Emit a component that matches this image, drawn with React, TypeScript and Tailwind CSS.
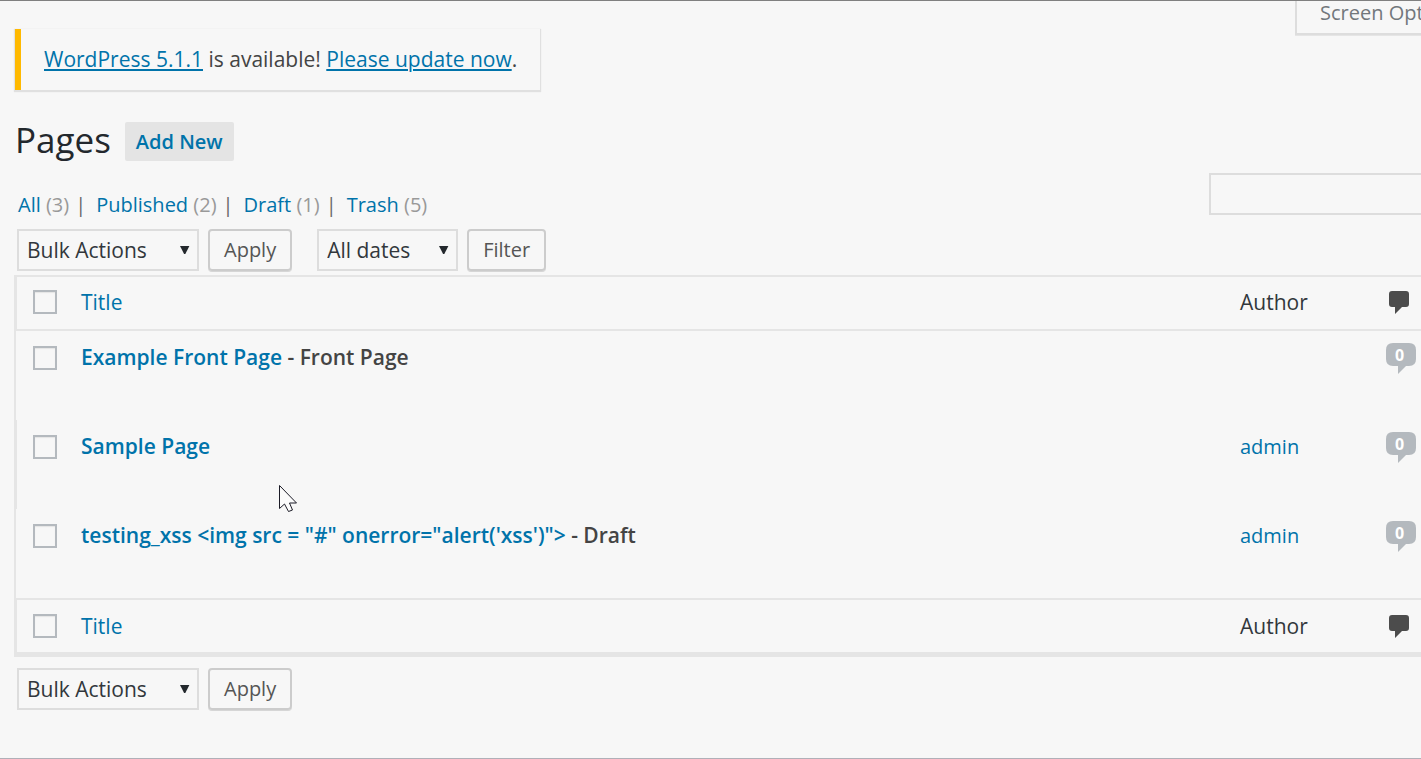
import React from "react";

type Row = { title: string; state?: string; author?: string; shaded?: boolean };

const rows: Row[] = [
  { title: "Example Front Page", state: "Front Page" },
  { title: "Sample Page", author: "admin", shaded: true },
  { title: `testing_xss <img src = "#" onerror="alert('xss')">`, state: "Draft", author: "admin" },
];

const views = [
  { label: "All", count: 3 },
  { label: "Published", count: 2 },
  { label: "Draft", count: 1 },
  { label: "Trash", count: 5 },
];

function Check({ label }: { label: string }) {
  return (
    <input
      type="checkbox"
      aria-label={label}
      className="block size-6 appearance-none border-2 border-[#b4b9be] bg-[#f7f7f7] shadow-[inset_0_1px_1px_#e4e4e4]"
    />
  );
}

function Dropdown({ label, option, className }: { label: string; option: string; className: string }) {
  return (
    <div className={`relative h-[42px] ${className}`}>
      <select
        aria-label={label}
        className="block h-full w-full appearance-none border-2 border-[#dddddd] bg-[#f7f7f7] pl-2 text-[21px] leading-6 text-[#32373c]"
      >
        <option>{option}</option>
      </select>
      <svg className="pointer-events-none absolute top-4 right-[9px]" width="10" height="10" viewBox="0 0 10 10" aria-hidden="true">
        <path d="M0 1H9.400L5.300 9H4.100Z" fill="#23282d" />
      </svg>
    </div>
  );
}

function ActionButton({ children }: { children: string }) {
  return (
    <button
      type="button"
      className="h-[42px] rounded-[4px] border-2 border-[#cccccc] px-[14px] pb-px text-[20px] leading-6 text-[#555555] shadow-[0_1px_0_#d6d6d6]"
    >
      {children}
    </button>
  );
}

function HeadingCells({ name }: { name: string }) {
  return (
    <>
      <td className="w-[65px] border-l border-[#e5e5e5] pl-4">
        <Check label={`Select all, ${name}`} />
      </td>
      <th scope="col" className="text-left font-normal">
        <a href="#title" className="text-[#0073aa]">Title</a>
      </th>
      <th scope="col" className="w-[146px] text-left font-normal text-[#32373c]">Author</th>
      <th scope="col" className="w-[35px] pl-[3px]">
        <svg width="20" height="24" viewBox="0 0 20 24" role="img" aria-label="Comments" className="block">
          <path d="M3 1H17Q20 1 20 4V14Q20 17 17 17H13L6 24V17H3Q0 17 0 14V4Q0 1 3 1Z" fill="#4c4c4c" />
        </svg>
      </th>
    </>
  );
}

function CommentCount() {
  return (
    <a href="#comments" aria-label="0 comments" className="relative block h-[31px] w-[30px]">
      <svg width="30" height="31" viewBox="0 0 30 31" aria-hidden="true">
        <path d="M7 0H23Q30 0 30 7V16Q30 23 23 23H20L12 31V23H7Q0 23 0 16V7Q0 0 7 0Z" fill="#b4b9be" />
      </svg>
      <span className="absolute inset-x-0 top-0 pr-[3px] text-center text-[16px] leading-6 font-bold text-white">0</span>
    </a>
  );
}

export default function App() {
  return (
    <div className="relative flex min-h-screen flex-col overflow-hidden border-t border-b border-t-[#808080] border-b-[#b0b0b8] bg-[#f7f7f7] font-['Open_Sans',sans-serif] text-[21px] leading-6 text-[#444444]">
      <div className="flex items-start justify-between pl-[15px]">
        <div className="mt-7 border-l-6 border-[#ffb900] pt-[18px] pr-[23px] pb-[19px] pl-[23px] shadow-[0_1px_1px_1px_#e0e0e0]">
          <a href="#release" className="text-[#0073aa] underline">WordPress 5.1.1</a> is available!{" "}
          <a href="#update" className="text-[#0073aa] underline">Please update now</a>.
        </div>
        <button
          type="button"
          className="h-[34px] w-[126px] overflow-hidden border-b-2 border-l-2 border-[#dddddd] pb-2 pl-[23px] text-left text-[20px] whitespace-nowrap text-[#72777c] shadow-[0_1px_0_#e5e5e5]"
        >
          Screen Options
        </button>
      </div>

      <header className="mt-8 flex items-center gap-[14px] pl-[15px]">
        <h1 className="pb-1 text-[35px] leading-[34px] text-[#23282d]">Pages</h1>
        <a href="#new" className="rounded-[2px] bg-[#e4e4e4] px-[11px] py-[7px] text-[20px] leading-[25px] font-semibold text-[#0073aa]">
          Add New
        </a>
      </header>

      <div className="mt-3 flex items-start justify-between pl-[18px]">
        <ul className="mt-5 flex text-[20px]">
          {views.map((view, i) => (
            <li key={view.label} className="flex">
              <a href="#view" className="text-[#0073aa]">
                {view.label} <span className="text-[#999999]">({view.count})</span>
              </a>
              {i < views.length - 1 && <span className="mr-[10px] ml-[6px] text-[#666666]">|</span>}
            </li>
          ))}
        </ul>
        <input
          type="search"
          aria-label="Search Pages"
          className="h-[42px] w-[212px] appearance-none border-2 border-r-0 border-[#dddddd] bg-transparent px-2"
        />
      </div>

      <div className="mt-3 flex pl-[17px]">
        <Dropdown label="Select bulk action" option="Bulk Actions" className="mr-[9px] w-[182px]" />
        <ActionButton>Apply</ActionButton>
        <Dropdown label="Filter by date" option="All dates" className="mr-[9px] ml-[25px] w-[141px]" />
        <ActionButton>Filter</ActionButton>
      </div>

      <div className="mt-1 pl-[14px]">
        <table className="w-full table-fixed border-separate border-spacing-0 border-t-2 border-b-5 border-l-2 border-[#e5e5e5]">
          <thead>
            <tr className="h-[54px] *:border-b-2 *:border-[#e5e5e5] *:pb-[2px]">
              <HeadingCells name="top" />
            </tr>
          </thead>
          <tbody>
            {rows.map((row) => (
              <tr key={row.title} className="h-[89px] *:align-top">
                <td className={`border-l pt-[15px] pl-4 ${row.shaded ? "border-[#e5e5e5]" : "border-transparent"}`}>
                  <Check label={`Select ${row.title}`} />
                </td>
                <td className="pt-[14px] font-semibold">
                  <a href="#edit" className="text-[#0073aa]">{row.title}</a>
                  {row.state && ` - ${row.state}`}
                </td>
                <td className="pt-[15px] text-[20px]">
                  {row.author && <a href="#author" className="text-[#0073aa]">{row.author}</a>}
                </td>
                <td className="pt-3">
                  <CommentCount />
                </td>
              </tr>
            ))}
          </tbody>
          <tfoot>
            <tr className="h-[54px] *:border-t-2 *:border-[#e5e5e5]">
              <HeadingCells name="bottom" />
            </tr>
          </tfoot>
        </table>
      </div>

      <div className="mt-[11px] flex pl-[17px]">
        <Dropdown label="Select bulk action for listed pages" option="Bulk Actions" className="mr-[9px] w-[182px]" />
        <ActionButton>Apply</ActionButton>
      </div>

      <svg className="pointer-events-none absolute top-[484px] left-[279px]" width="19" height="28" viewBox="0 0 19 28" aria-hidden="true">
        <path d="M.5 .5V23.500L5.500 19L9.500 26.500L13.500 25L10.500 18H17.500Z" fill="#fbfbfb" stroke="#1b1b26" strokeWidth="1" />
      </svg>
    </div>
  );
}
